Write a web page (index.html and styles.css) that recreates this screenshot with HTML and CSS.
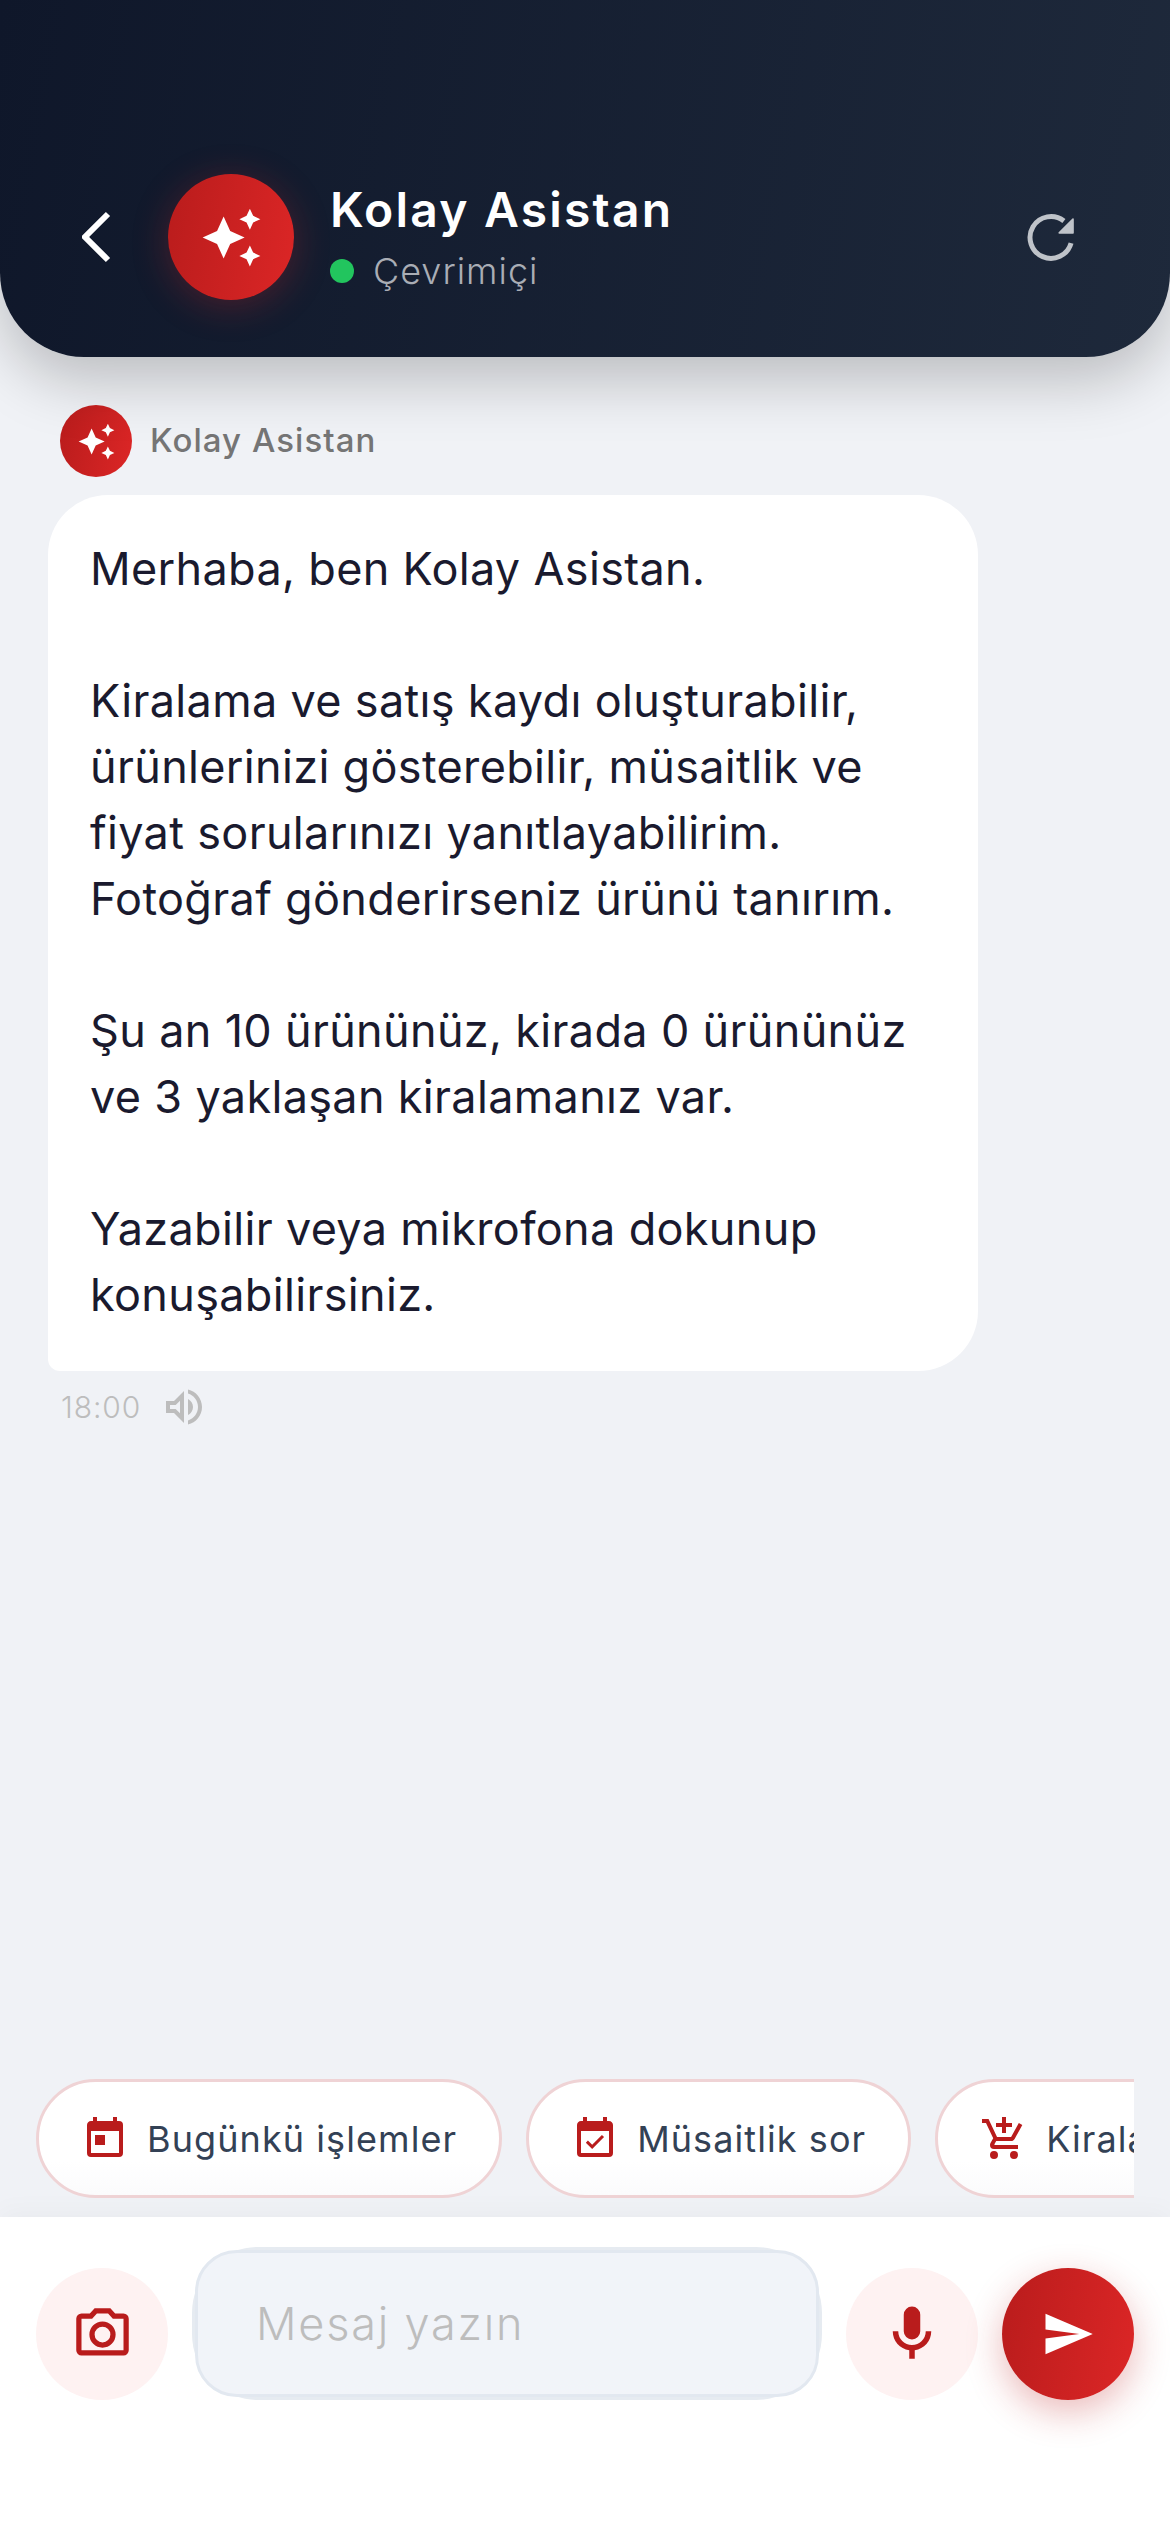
FILE: index.html
```html
<!DOCTYPE html>
<html lang="tr">
<head>
    <meta charset="UTF-8">
    <title>Kolay Asistan</title>
    <link rel="stylesheet" href="styles.css">
</head>
<body>
    <!-- üst bar -->
    <header class="topbar">
        <svg class="back-icon" viewBox="0 0 30 52"><path d="M26 3L3 26l23 23" fill="none" stroke="#fff" stroke-width="6"/></svg>
        <div class="avatar avatar-large">
            <svg class="spark-large" viewBox="0 0 24 24"><path fill="#fff" d="M19,1L17.74,3.75L15,5L17.74,6.26L19,9L20.25,6.26L23,5L20.25,3.75M9,4L6.5,9.5L1,12L6.5,14.5L9,20L11.5,14.5L17,12L11.5,9.5M19,15L17.74,17.74L15,19L17.74,20.25L19,23L20.25,20.25L23,19L20.25,17.74"/></svg>
        </div>
        <div class="topbar-text">
            <div class="topbar-title">Kolay Asistan</div>
            <div class="topbar-status"><span class="status-dot"></span>Çevrimiçi</div>
        </div>
        <svg class="refresh-icon" viewBox="0 0 24 24">
            <path d="M19.3 14.2A7.6 7.6 0 1 1 16.7 6.2" fill="none" stroke="#bfc3c9" stroke-width="1.8"/>
            <path d="M20 5.5v5h-5z" fill="#bfc3c9" stroke="#bfc3c9" stroke-width=".6" stroke-linejoin="round"/>
        </svg>
    </header>

    <!-- mesajlar -->
    <main class="messages">
        <div class="sender">
            <div class="avatar avatar-small">
                <svg class="spark-small" viewBox="0 0 24 24"><path fill="#fff" d="M19,1L17.74,3.75L15,5L17.74,6.26L19,9L20.25,6.26L23,5L20.25,3.75M9,4L6.5,9.5L1,12L6.5,14.5L9,20L11.5,14.5L17,12L11.5,9.5M19,15L17.74,17.74L15,19L17.74,20.25L19,23L20.25,20.25L23,19L20.25,17.74"/></svg>
            </div>
            <span class="sender-name">Kolay Asistan</span>
        </div>
        <div class="bubble">Merhaba, ben Kolay Asistan.

Kiralama ve satış kaydı oluşturabilir,
ürünlerinizi gösterebilir, müsaitlik ve
fiyat sorularınızı yanıtlayabilirim.
Fotoğraf gönderirseniz ürünü tanırım.

Şu an 10 ürününüz, kirada 0 ürününüz
ve 3 yaklaşan kiralamanız var.

Yazabilir veya mikrofona dokunup
konuşabilirsiniz.</div>
        <div class="meta">
            <span class="meta-time">18:00</span>
            <svg class="meta-icon" viewBox="0 0 24 24"><path fill="#bdbdbd" d="M3 9v6h4l5 5V4L7 9H3zm7-.17v6.34L7.83 13H5v-2h2.83L10 8.83zM16.5 12c0-1.77-1.02-3.29-2.5-4.03v8.05c1.48-.73 2.5-2.25 2.5-4.02zM14 3.23v2.06c2.89.86 5 3.54 5 6.71s-2.11 5.85-5 6.71v2.06c4.01-.91 7-4.49 7-8.77 0-4.28-2.99-7.86-7-8.77z"/></svg>
        </div>
    </main>

    <!-- hızlı işlemler -->
    <div class="chips">
        <div class="chip">
            <svg class="chip-icon" viewBox="0 0 24 24"><path d="M7,10H12V15H7M19,19H5V8H19M19,3H18V1H16V3H8V1H6V3H5C3.89,3 3,3.9 3,5V19A2,2 0 0,0 5,21H19A2,2 0 0,0 21,19V5A2,2 0 0,0 19,3Z"/></svg>
            Bugünkü işlemler
        </div>
        <div class="chip">
            <svg class="chip-icon" viewBox="0 0 24 24"><path d="M19,19H5V8H19M16,1V3H8V1H6V3H5C3.89,3 3,3.89 3,5V19A2,2 0 0,0 5,21H19A2,2 0 0,0 21,19V5C21,3.89 20.1,3 19,3H18V1M16.53,11.06L15.47,10L10.59,14.88L8.47,12.76L7.41,13.82L10.59,17L16.53,11.06Z"/></svg>
            Müsaitlik sor
        </div>
        <div class="chip">
            <svg class="chip-icon" viewBox="0 0 24 24"><path d="M11,9H13V6H16V4H13V1H11V4H8V6H11M7,18A2,2 0 0,0 5,20A2,2 0 0,0 7,22A2,2 0 0,0 9,20A2,2 0 0,0 7,18M17,18A2,2 0 0,0 15,20A2,2 0 0,0 17,22A2,2 0 0,0 19,20A2,2 0 0,0 17,18M7.17,14.75L7.2,14.63L8.1,13H15.55C16.3,13 16.96,12.59 17.3,11.97L21.16,4.96L19.42,4H19.41L18.31,6L15.55,11H8.53L8.4,10.73L6.16,6L5.21,4L4.27,2H1V4H3L6.6,11.59L5.25,14.04C5.09,14.32 5,14.65 5,15A2,2 0 0,0 7,17H19V15H7.42C7.29,15 7.17,14.89 7.17,14.75Z"/></svg>
            Kiralama ekle
        </div>
    </div>

    <!-- mesaj yazma -->
    <footer class="composer">
        <div class="round-btn light-btn">
            <svg class="camera-icon" viewBox="0 0 24 24"><path d="M20,4H16.83L15,2H9L7.17,4H4A2,2 0 0,0 2,6V18A2,2 0 0,0 4,20H20A2,2 0 0,0 22,18V6A2,2 0 0,0 20,4M20,18H4V6H8.05L9.88,4H14.12L15.95,6H20V18M12,7A5,5 0 0,0 7,12A5,5 0 0,0 12,17A5,5 0 0,0 17,12A5,5 0 0,0 12,7M12,15A3,3 0 0,1 9,12A3,3 0 0,1 15,12A3,3 0 0,1 12,15Z"/></svg>
        </div>
        <div class="input-wrap">
            <input class="input" type="text" placeholder="Mesaj yazın">
        </div>
        <div class="round-btn light-btn">
            <svg class="mic-icon" viewBox="0 0 24 24"><path d="M12,2A3,3 0 0,1 15,5V11A3,3 0 0,1 12,14A3,3 0 0,1 9,11V5A3,3 0 0,1 12,2M19,11C19,14.53 16.39,17.44 13,17.93V21H11V17.93C7.61,17.44 5,14.53 5,11H7A5,5 0 0,0 12,16A5,5 0 0,0 17,11H19Z"/></svg>
        </div>
        <div class="round-btn send-btn">
            <svg class="send-icon" viewBox="0 0 24 24"><path fill="#fff" d="M2,21L23,12L2,3V10L17,12L2,14V21Z"/></svg>
        </div>
    </footer>
</body>
</html>
```

FILE: styles.css
```css
* { box-sizing: border-box; }
body { margin: 0; width: 1170px; height: 2532px; display: flex; flex-direction: column; overflow: hidden; background: #f0f2f6; font-family: Inter, "Noto Sans", sans-serif; }

.topbar { position: relative; z-index: 2; flex: none; height: 357px; padding: 174px 86px 57px 82px; display: flex; align-items: center; background: linear-gradient(100deg, #0f172a, #1e293b); border-radius: 0 0 84px 84px; box-shadow: 0 24px 60px rgba(0, 0, 0, .22); }
.back-icon { width: 30px; height: 52px; flex: none; margin-right: 56px; }
.avatar { flex: none; display: flex; align-items: center; justify-content: center; border-radius: 50%; background: linear-gradient(100deg, #b91c1c, #dc2626); }
.avatar-large { width: 126px; height: 126px; box-shadow: 0 6px 36px rgba(220, 38, 38, .28); }
.spark-large { width: 63px; height: 63px; }
.avatar-small { width: 72px; height: 72px; }
.spark-small { width: 39px; height: 39px; }
.topbar-text { flex: 1; margin-left: 36px; }
.topbar-title { font-size: 48px; line-height: 60px; font-weight: 600; letter-spacing: 2.2px; color: #fff; }
.topbar-status { display: flex; align-items: center; margin-top: 7px; font-size: 36px; line-height: 48px; font-weight: 350; letter-spacing: 1px; color: #a9adb5; }
.status-dot { width: 24px; height: 24px; margin-right: 19px; border-radius: 50%; background: #22c55e; }
.refresh-icon { width: 66px; height: 66px; flex: none; }

.messages { flex: 1; padding: 48px 0 0 48px; }
.sender { display: flex; align-items: center; padding-left: 12px; margin-bottom: 18px; }
.sender-name { margin-left: 18px; margin-top: -2px; font-size: 33px; font-weight: 500; letter-spacing: 1.05px; color: #757575; }
.bubble { width: 930px; padding: 41px 42px 43px; border-radius: 60px 60px 60px 12px; background: #fff; font-size: 45px; line-height: 66px; font-weight: 370; letter-spacing: .33px; color: #1a1a2e; white-space: pre-line; }
.meta { display: flex; align-items: center; height: 72px; padding-left: 13px; }
.meta-time { font-size: 30px; font-weight: 350; letter-spacing: .9px; color: #bdbdbd; }
.meta-icon { width: 48px; height: 48px; margin-left: 19px; }

.chips { flex: none; display: flex; gap: 24px; margin: 0 36px; padding: 0; height: 138px; overflow: hidden; }
.chip { flex: none; display: flex; align-items: center; height: 119px; padding: 0 42px; border: 3px solid #efd3d5; border-radius: 60px; background: linear-gradient(#fff 70%, #fbfbfc); font-size: 36px; font-weight: 420; letter-spacing: 1.08px; color: #334155; white-space: nowrap; }
.chip-icon { width: 48px; height: 48px; margin-right: 18px; fill: #b91c1c; }

.composer { flex: none; height: 315px; padding: 30px 36px 0; display: flex; align-items: flex-start; background: #fff; box-shadow: 0 -6px 24px rgba(0, 0, 0, .03); }
.round-btn { flex: none; width: 132px; height: 132px; margin-top: 21px; display: flex; align-items: center; justify-content: center; border-radius: 50%; }
.light-btn { background: #fef2f2; }
.light-btn svg { fill: #b91c1c; }
.send-btn { margin-left: 24px; background: linear-gradient(100deg, #b91c1c, #dc2626); box-shadow: 0 12px 36px rgba(185, 28, 28, .3); }
.camera-icon { width: 63px; height: 63px; }
.mic-icon { width: 66px; height: 66px; }
.send-icon { width: 54px; height: 54px; }
.input-wrap { flex: none; width: 630px; height: 153px; margin: 0 24px; border-radius: 66px; background: #e6ebf1; display: flex; align-items: center; justify-content: center; }
.input { width: 624px; height: 147px; padding: 0 58px; border: 3px solid #e2e8f0; border-radius: 42px; background: #f1f4f9; font: 350 45px Inter, "Noto Sans", sans-serif; outline: none; }
.input::placeholder { color: #bdbdbd; opacity: 1; letter-spacing: 1.8px; }
```
